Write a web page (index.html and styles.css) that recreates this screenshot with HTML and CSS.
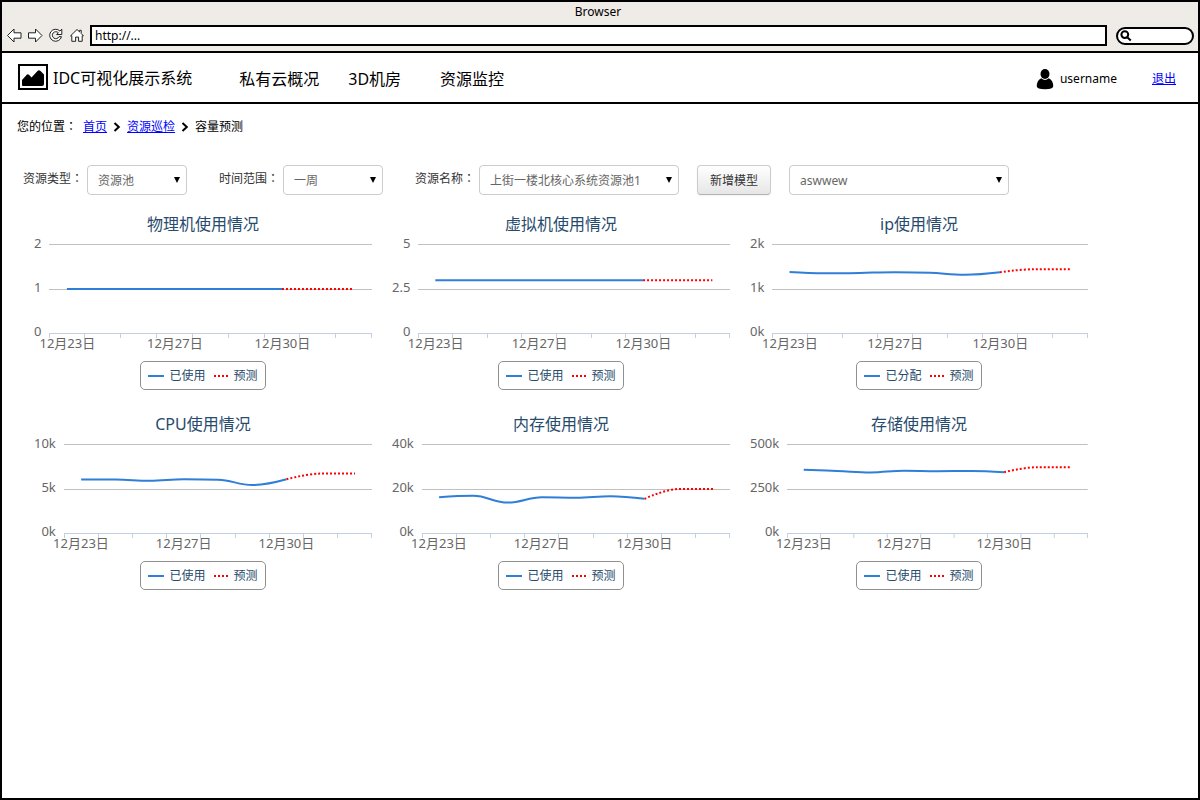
FILE: index.html
```html
<!DOCTYPE html>
<html lang="zh-CN">
<head>
<meta charset="utf-8">
<title>IDC可视化展示系统 - 容量预测</title>
<link rel="stylesheet" href="styles.css">
</head>
<body>
<div class="window">
  <div class="chrome">
    <div class="chrome-title">Browser</div>
    <div class="toolbar">
      <button class="tool" type="button" aria-label="后退"><svg width="16" height="16" viewBox="0 0 16 16"><path d="M1.5 7.5 L8 1 V4.8 H15 V10.2 H8 V14 Z"/></svg></button>
      <button class="tool" type="button" aria-label="前进"><svg width="16" height="16" viewBox="0 0 16 16"><path d="M15 7.5 L8.5 1 V4.8 H1.5 V10.2 H8.5 V14 Z"/></svg></button>
      <button class="tool" type="button" aria-label="刷新"><svg width="16" height="16" viewBox="0 0 16 16"><path d="M13.8 1.2 V6.5 H8.6 L10.4 4.8 A3.5 3.5 0 1 0 11 8.7 H13.5 A6 6 0 1 1 12 3.1 Z"/></svg></button>
      <button class="tool" type="button" aria-label="主页"><svg width="16" height="16" viewBox="0 0 16 16"><path d="M2.8 13.3 V7.8 H1.6 L8 1.5 L10.6 3.9 V2.3 H12.2 V5.5 L14.4 7.8 H13.2 V13.3 H9.6 V9.1 H6.6 V13.3 Z"/></svg></button>
      <input class="address" type="text" value="http://..." aria-label="地址">
      <div class="search">
        <svg class="search-icon" width="12" height="12" viewBox="0 0 12 12"><circle cx="4.8" cy="4.6" r="3.4"/><path d="M7.2 7.2 L10.8 10.6"/></svg>
        <input class="search-input" type="text" aria-label="搜索">
      </div>
    </div>
  </div>

  <header class="header">
    <svg class="logo" width="30" height="26" viewBox="0 0 30 26"><rect x="1" y="1" width="28" height="24" fill="#fff" stroke="#000" stroke-width="2"/><path d="M4 21 V16 L9 10.5 Q10 9.8 11 10.8 L13.5 13.5 L19.5 7 Q21 5.3 22.5 7 L26 10.5 V20 Q26 22 24 22 H5 Q4 22 4 21 Z"/></svg>
    <span class="brand">IDC可视化展示系统</span>
    <nav class="nav">
      <a href="#">私有云概况</a>
      <a href="#">3D机房</a>
      <a class="nav-monitor" href="#">资源监控</a>
    </nav>
    <div class="account">
      <svg width="18" height="22" viewBox="0 0 18 22"><ellipse cx="9" cy="6" rx="4.5" ry="5"/><path d="M5.3 10.2 Q9 13.6 12.7 10.2 Q17.2 12.2 17.2 18.2 Q17.2 21.2 9 21.2 Q0.8 21.2 0.8 18.2 Q0.8 12.2 5.3 10.2 Z"/></svg>
      <span>username</span>
      <a class="logout" href="#">退出</a>
    </div>
  </header>

  <main>
    <nav class="crumbs" aria-label="位置">
      <span>您的位置<span class="colon" lang="zh-TW">：</span></span>
      <a href="#">首页</a>
      <svg class="chevron" width="8" height="10" viewBox="0 0 8 10"><path d="M1.5 1 L5.8 5 L1.5 9"/></svg>
      <a href="#">资源巡检</a>
      <svg class="chevron" width="8" height="10" viewBox="0 0 8 10"><path d="M1.5 1 L5.8 5 L1.5 9"/></svg>
      <span>容量预测</span>
    </nav>

    <form class="filters">
      <div class="field">
        <label for="type">资源类型<span class="colon" lang="zh-TW">：</span></label>
        <div class="select"><select id="type"><option>资源池</option></select></div>
      </div>
      <div class="field">
        <label for="range">时间范围<span class="colon" lang="zh-TW">：</span></label>
        <div class="select"><select id="range"><option>一周</option></select></div>
      </div>
      <div class="field">
        <label for="name">资源名称<span class="colon" lang="zh-TW">：</span></label>
        <div class="select select-wide"><select id="name"><option>上街一楼北核心系统资源池1</option></select></div>
      </div>
      <div class="actions">
        <button class="add" type="button">新增模型</button>
        <div class="select select-model"><select aria-label="模型"><option>aswwew</option></select></div>
      </div>
    </form>

    <section class="charts">
      <figure class="chart">
        <figcaption>物理机使用情况</figcaption>
        <div class="plot">
          <div class="y-axis"><span>2</span><span>1</span><span>0</span></div>
          <svg class="lines" viewBox="0 0 900 94" preserveAspectRatio="none">
            <path class="rule" d="M0 .5H900M0 45.5H900"/>
            <path class="axis" d="M0 89.5H900M1 89V94M100 89V94M200 89V94M300 89V94M400 89V94M500 89V94M600 89V94M700 89V94M800 89V94M899 89V94"/>
            <path class="used" d="M50 45H650"/>
            <path class="forecast" d="M650 45H850"/>
          </svg>
          <div class="x-axis"><span>12月23日</span><span>12月27日</span><span>12月30日</span></div>
        </div>
        <div class="legend"><span class="key">已使用</span><span class="key key-forecast">预测</span></div>
      </figure>

      <figure class="chart">
        <figcaption>虚拟机使用情况</figcaption>
        <div class="plot">
          <div class="y-axis"><span>5</span><span>2.5</span><span>0</span></div>
          <svg class="lines" viewBox="0 0 900 94" preserveAspectRatio="none">
            <path class="rule" d="M0 .5H900M0 45.5H900"/>
            <path class="axis" d="M0 89.5H900M1 89V94M100 89V94M200 89V94M300 89V94M400 89V94M500 89V94M600 89V94M700 89V94M800 89V94M899 89V94"/>
            <path class="used" d="M50 36.3H650"/>
            <path class="forecast" d="M650 36.3H850"/>
          </svg>
          <div class="x-axis"><span>12月23日</span><span>12月27日</span><span>12月30日</span></div>
        </div>
        <div class="legend"><span class="key">已使用</span><span class="key key-forecast">预测</span></div>
      </figure>

      <figure class="chart">
        <figcaption>ip使用情况</figcaption>
        <div class="plot">
          <div class="y-axis"><span>2k</span><span>1k</span><span>0k</span></div>
          <svg class="lines" viewBox="0 0 900 94" preserveAspectRatio="none">
            <path class="rule" d="M0 .5H900M0 45.5H900"/>
            <path class="axis" d="M0 89.5H900M1 89V94M100 89V94M200 89V94M300 89V94M400 89V94M500 89V94M600 89V94M700 89V94M800 89V94M899 89V94"/>
            <path class="used" d="M50 28C50 28 110 29.3 150 29.3C190 29.3 210 29.2 250 29C290 28.7 310 28.2 350 28.2C390 28.2 410 28.2 450 28.8C490 29.4 510 30.7 550 30.7C590 30.7 650 28.2 650 28.2"/>
            <path class="forecast" d="M650 28.2C650 28.2 710 25.2 750 25.2H850"/>
          </svg>
          <div class="x-axis"><span>12月23日</span><span>12月27日</span><span>12月30日</span></div>
        </div>
        <div class="legend"><span class="key">已分配</span><span class="key key-forecast">预测</span></div>
      </figure>

      <figure class="chart">
        <figcaption>CPU使用情况</figcaption>
        <div class="plot">
          <div class="y-axis"><span>10k</span><span>5k</span><span>0k</span></div>
          <svg class="lines" viewBox="0 0 900 94" preserveAspectRatio="none">
            <path class="rule" d="M0 .5H900M0 45.5H900"/>
            <path class="axis" d="M0 89.5H900M1 89V94M100 89V94M200 89V94M300 89V94M400 89V94M500 89V94M600 89V94M700 89V94M800 89V94M899 89V94"/>
            <path class="used" d="M50 35.5C50 35.5 110 35.5 150 35.5C190 35.5 210 36.8 250 36.8C290 36.8 310 35.2 350 35.2C390 35.2 410 35.2 450 35.7C490 36.2 510 41 550 41C590 41 650 35.3 650 35.3"/>
            <path class="forecast" d="M650 35.3C650 35.3 710 29.6 750 29.6H850"/>
          </svg>
          <div class="x-axis"><span>12月23日</span><span>12月27日</span><span>12月30日</span></div>
        </div>
        <div class="legend"><span class="key">已使用</span><span class="key key-forecast">预测</span></div>
      </figure>

      <figure class="chart">
        <figcaption>内存使用情况</figcaption>
        <div class="plot">
          <div class="y-axis"><span>40k</span><span>20k</span><span>0k</span></div>
          <svg class="lines" viewBox="0 0 900 94" preserveAspectRatio="none">
            <path class="rule" d="M0 .5H900M0 45.5H900"/>
            <path class="axis" d="M0 89.5H900M1 89V94M100 89V94M200 89V94M300 89V94M400 89V94M500 89V94M600 89V94M700 89V94M800 89V94M899 89V94"/>
            <path class="used" d="M50 53.2C50 53.2 110 51.8 150 51.8C190 51.8 210 58.6 250 58.6C290 58.6 310 53.3 350 53.3C390 53.3 410 53.7 450 53.7C490 53.7 510 52.2 550 52.2C590 52.2 650 54.8 650 54.8"/>
            <path class="forecast" d="M650 54.8C650 54.8 710 45 750 45H850"/>
          </svg>
          <div class="x-axis"><span>12月23日</span><span>12月27日</span><span>12月30日</span></div>
        </div>
        <div class="legend"><span class="key">已使用</span><span class="key key-forecast">预测</span></div>
      </figure>

      <figure class="chart">
        <figcaption>存储使用情况</figcaption>
        <div class="plot">
          <div class="y-axis"><span>500k</span><span>250k</span><span>0k</span></div>
          <svg class="lines" viewBox="0 0 900 94" preserveAspectRatio="none">
            <path class="rule" d="M0 .5H900M0 45.5H900"/>
            <path class="axis" d="M0 89.5H900M1 89V94M100 89V94M200 89V94M300 89V94M400 89V94M500 89V94M600 89V94M700 89V94M800 89V94M899 89V94"/>
            <path class="used" d="M50 25.7C50 25.7 110 26.4 150 26.9C190 27.4 210 28.4 250 28.4C290 28.4 310 26.7 350 26.7C390 26.7 410 27.2 450 27.2C490 27.2 510 27 550 27C590 27 650 28.2 650 28.2"/>
            <path class="forecast" d="M650 28.2C650 28.2 710 23.2 750 23.2H850"/>
          </svg>
          <div class="x-axis"><span>12月23日</span><span>12月27日</span><span>12月30日</span></div>
        </div>
        <div class="legend"><span class="key">已使用</span><span class="key key-forecast">预测</span></div>
      </figure>
    </section>
  </main>
</div>
</body>
</html>
```
FILE: styles.css
```css
* {
  box-sizing: border-box;
}

body {
  margin: 0;
  background: #fff;
  color: #000;
  font: 12px/16px "Noto Sans", "Noto Sans CJK SC", sans-serif;
}

a {
  color: #00f;
}

input,
select,
button {
  font: inherit;
}

.window {
  min-height: 100vh;
  border: 2px solid #000;
}

.colon {
  font-family: "Noto Sans CJK TC", sans-serif;
  line-height: 1;
}

/* Browser frame */
.chrome {
  background: #efebe7;
  border-bottom: 2px solid #000;
}

.chrome-title {
  line-height: 20px;
  text-align: center;
  padding-right: 4px;
}

.toolbar {
  display: flex;
  align-items: center;
  gap: 5px;
  padding: 3px 4px 5px;
}

.tool {
  display: flex;
  padding: 0;
  border: 0;
  background: none;
}

.tool path {
  fill: #fff;
  stroke: #222;
  stroke-width: 1;
}

.address {
  flex: 1;
  min-width: 0;
  height: 21px;
  margin: 0 4px 0 0;
  padding: 0 3px;
  border: 2px solid #000;
  background: #fff;
}

.search {
  display: flex;
  align-items: center;
  width: 78px;
  height: 18px;
  padding: 0 8px 0 2px;
  border: 2px solid #000;
  border-radius: 9px;
  background: #fff;
}

.search-icon {
  flex: none;
  fill: none;
  stroke: #000;
  stroke-width: 2;
}

.search-input {
  flex: 1;
  min-width: 0;
  height: 12px;
  padding: 0;
  border: 0;
  background: none;
}

/* Site header */
.header {
  display: flex;
  align-items: center;
  min-height: 51px;
  padding: 0 22px 0 16px;
  border-bottom: 2px solid #000;
}

.logo {
  margin-bottom: 1px;
}

.brand {
  margin-left: 5px;
  font-size: 16px;
  line-height: 24px;
}

.nav {
  display: flex;
  gap: 29px;
  margin-left: 47px;
  padding-top: 2px;
  font-size: 16px;
  line-height: 24px;
}

.nav a {
  color: #000;
  text-decoration: none;
}

.nav-monitor {
  margin-left: 10px;
}

.account {
  display: flex;
  align-items: center;
  gap: 6px;
  margin-left: auto;
  padding-top: 2px;
}

.logout {
  margin-left: 29px;
}

/* Breadcrumbs and filters */
.crumbs {
  display: flex;
  align-items: center;
  gap: 6px;
  padding: 15px 15px 0;
}

.chevron path {
  fill: none;
  stroke: #000;
  stroke-width: 2;
}

.filters {
  display: flex;
  gap: 32px;
  padding: 30px 22px 0 21px;
}

.field {
  display: flex;
  gap: 4px;
}

.field label {
  color: #333;
  line-height: 28px;
  white-space: nowrap;
}

.actions {
  display: flex;
  gap: 18px;
  margin-left: -14px;
}

.select {
  position: relative;
  width: 100px;
}

.select-wide {
  width: 200px;
}

.select-model {
  width: 220px;
}

.select::after {
  content: "";
  position: absolute;
  top: 12px;
  right: 7px;
  border: 3px solid transparent;
  border-top: 6px solid #000;
  border-bottom: 0;
  pointer-events: none;
}

.select select {
  width: 100%;
  height: 30px;
  padding: 2px 20px 0 10px;
  border: 1px solid #ccc;
  border-radius: 4px;
  background: #fff;
  color: #666;
  appearance: none;
}

.add {
  width: 74px;
  height: 30px;
  padding: 2px 0 0;
  border: 1px solid #ccc;
  border-bottom-color: #b3b3b3;
  border-radius: 4px;
  background: linear-gradient(#fff, #e6e6e6);
  box-shadow: 0 1px 2px rgba(0, 0, 0, 0.05);
  color: #333;
}

/* Charts */
.charts {
  display: grid;
  grid-template-columns: repeat(3, minmax(0, 1fr));
  padding: 9px 100px 0 22px;
}

.chart {
  margin: 0;
  padding: 8px 10px 14px;
}

.chart figcaption {
  color: #274b6d;
  font-size: 16px;
  line-height: 24px;
  text-align: center;
}

.plot {
  display: grid;
  grid-template-columns: auto minmax(0, 1fr);
  column-gap: 8px;
  color: #666;
  font-size: 13px;
  line-height: 12px;
}

.y-axis {
  display: flex;
  flex-direction: column;
  justify-content: space-between;
  height: 100px;
  margin-top: 1px;
  text-align: right;
}

.lines {
  display: block;
  width: 100%;
  height: 94px;
  margin-top: 8px;
}

.lines path {
  fill: none;
  vector-effect: non-scaling-stroke;
}

.lines .rule {
  stroke: #c0c0c0;
  shape-rendering: crispEdges;
}

.lines .axis {
  stroke: #c0d0e0;
  shape-rendering: crispEdges;
}

.lines .used {
  stroke: #2f7ed8;
  stroke-width: 2;
}

.lines .forecast {
  stroke: #f00;
  stroke-width: 2;
  stroke-dasharray: 2 2;
}

.x-axis {
  display: grid;
  grid-column: 2;
  grid-template-columns: repeat(9, minmax(0, 1fr));
  margin-top: -1px;
}

.x-axis span {
  display: flex;
  justify-content: center;
  white-space: nowrap;
}

.x-axis span:nth-child(2) {
  grid-column: 4;
}

.x-axis span:nth-child(3) {
  grid-column: 7;
}

.legend {
  display: flex;
  align-items: center;
  gap: 8px;
  width: fit-content;
  height: 29px;
  margin: 12px auto 0;
  padding: 0 7px;
  border: 1px solid #909090;
  border-radius: 5px;
  color: #274b6d;
}

.key {
  display: flex;
  align-items: center;
  gap: 5px;
}

.key::before {
  content: "";
  width: 16px;
  height: 2px;
  background: #2f7ed8;
}

.key-forecast::before {
  width: 15px;
  background: repeating-linear-gradient(90deg, #f00 0 2px, transparent 2px 4px);
}
```
